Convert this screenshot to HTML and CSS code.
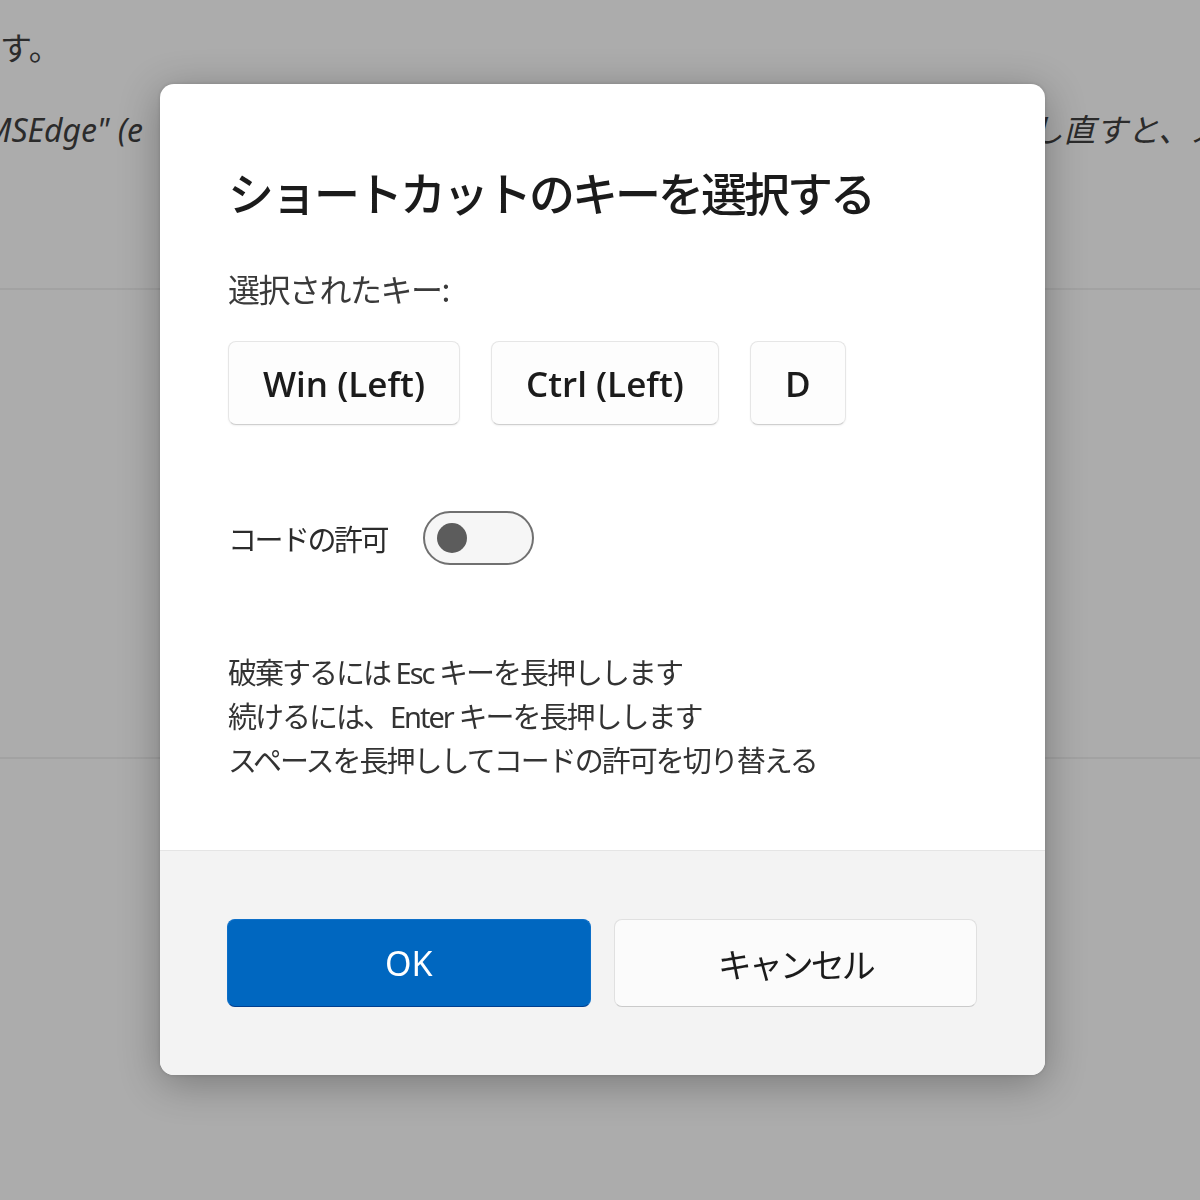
FILE: index.html
```html
<!DOCTYPE html>
<html lang="ja">
<head>
    <meta charset="UTF-8">
    <meta name="viewport" content="width=device-width, initial-scale=1.0">
    <title>ショートカットのキーを選択する</title>
    <link rel="stylesheet" href="styles.css">
</head>
<body>
    <div class="page">
        <p class="page-line">す。</p>
        <p class="page-line page-note">
            <span class="note-left">"MSEdge" (e</span>
            <span class="note-right">し直すと、ス</span>
        </p>
        <div class="page-rule"></div>
        <div class="page-gap"></div>
        <div class="page-rule"></div>
    </div>

    <div class="overlay">
        <div class="dialog">
            <div class="dialog-body">
                <h1 class="dialog-title">ショートカットのキーを選択する</h1>
                <div class="keys-label">選択されたキー:</div>

                <div class="keys">
                    <div class="key">Win (Left)</div>
                    <div class="key">Ctrl (Left)</div>
                    <div class="key">D</div>
                </div>

                <div class="chord-row">
                    <span class="chord-label">コードの許可</span>
                    <div class="toggle"><span class="toggle-knob"></span></div>
                </div>

                <div class="hints">
                    <p>破棄するには Esc キーを長押しします</p>
                    <p>続けるには、Enter キーを長押しします</p>
                    <p>スペースを長押ししてコードの許可を切り替える</p>
                </div>
            </div>

            <div class="dialog-footer">
                <button class="btn btn-primary">OK</button>
                <button class="btn">キャンセル</button>
            </div>
        </div>
    </div>
</body>
</html>
```

FILE: styles.css
```css
body {
    margin: 0;
    font-family: "Noto Sans", "Noto Sans CJK JP", sans-serif;
    background-color: #acacac;
    color: #2b2b2b;
}
.page {
    height: 1200px;
    overflow: hidden;
    padding-top: 26px;
    box-sizing: border-box;
}
.page-line {
    margin: 0;
    font-size: 32px;
    line-height: 44px;
    white-space: nowrap;
}
.page-note {
    display: flex;
    margin-top: 38px;
    font-style: italic;
}
.note-left {
    margin-left: -28px;
}
.note-right {
    margin-left: auto;
    margin-right: -22px;
}
.page-rule {
    height: 2px;
    margin-top: 136px;
    background-color: #a2a2a2;
}
.page-gap {
    height: 467px;
}
.page-rule + .page-gap + .page-rule {
    margin-top: 0;
}
.overlay {
    position: fixed;
    inset: 0;
    padding: 84px 0 0 160px;
}
.dialog {
    width: 885px;
    background-color: #fff;
    border-radius: 14px;
    overflow: hidden;
    box-shadow: 0 8px 40px rgba(0, 0, 0, 0.3), 0 0 4px rgba(0, 0, 0, 0.15);
}
.dialog-body {
    padding: 77px 68px 67px;
}
.dialog-title {
    margin: 0;
    font-family: "Noto Sans CJK JP", sans-serif;
    font-size: 46px;
    line-height: 60px;
    font-weight: 500;
    letter-spacing: -3px;
    color: #1b1b1b;
}
.keys-label {
    margin-top: 45px;
    font-family: "Noto Sans CJK JP", sans-serif;
    font-size: 32px;
    line-height: 44px;
    letter-spacing: -1.5px;
    color: #3a3a3a;
}
.keys {
    display: flex;
    gap: 31px;
    margin-top: 31px;
}
.key {
    height: 84px;
    padding: 0 34px;
    box-sizing: border-box;
    display: flex;
    align-items: center;
    border: 1px solid #e6e6e6;
    border-bottom-color: #cfcfcf;
    border-radius: 8px;
    background-color: #fdfdfd;
    box-shadow: 0 1px 2px rgba(0, 0, 0, 0.06);
    font-family: "Open Sans", "Noto Sans", sans-serif;
    font-size: 35px;
    font-weight: 600;
    color: #1b1b1b;
}
.chord-row {
    display: flex;
    align-items: center;
    gap: 36px;
    margin-top: 86px;
}
.chord-label {
    font-family: "Noto Sans CJK JP", sans-serif;
    font-size: 29px;
    letter-spacing: -2.5px;
    color: #2b2b2b;
}
.toggle {
    width: 111px;
    height: 54px;
    box-sizing: border-box;
    display: flex;
    align-items: center;
    padding-left: 12px;
    border: 2px solid #707070;
    border-radius: 27px;
    background-color: #f6f6f6;
}
.toggle-knob {
    width: 30px;
    height: 30px;
    border-radius: 50%;
    background-color: #5c5c5c;
}
.hints {
    margin-top: 86px;
    font-size: 29px;
    line-height: 44px;
    letter-spacing: -2px;
    color: #333;
}
.hints p {
    margin: 0;
    white-space: nowrap;
}
.dialog-footer {
    display: grid;
    grid-template-columns: 1fr 1fr;
    gap: 23px;
    padding: 68px 68px 68px 67px;
    border-top: 1px solid #e5e5e5;
    background-color: #f3f3f3;
}
.btn {
    height: 88px;
    border: 1px solid #e0e0e0;
    border-bottom-color: #cacaca;
    border-radius: 8px;
    background-color: #fbfbfb;
    font-family: "Noto Sans", "Noto Sans CJK JP", sans-serif;
    font-size: 34px;
    letter-spacing: -3px;
    color: #1b1b1b;
}
.btn-primary {
    border-color: #0d6fc8;
    border-bottom-color: #003f8f;
    background-color: #0067c0;
    color: #fff;
    letter-spacing: 0;
}
```
